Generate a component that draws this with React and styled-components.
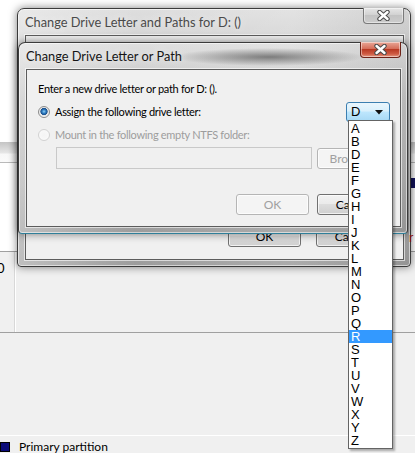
import React from "react";
import styled, { createGlobalStyle } from "styled-components";

const UI = `Lato, "Noto Sans", sans-serif`;

const Global = createGlobalStyle`
  html, body { margin: 0; padding: 0; background: #f0f0f0; }
  #root { width: 415px; height: 453px; }
`;

const LETTERS = "ABDEFGHIJKLMNOPQRSTUVWXYZ".split("");

function CloseGlyph() {
  return (
    <svg width="13" height="11" viewBox="0 0 13 11">
      <path d="M2.5 2 L10.5 9 M10.5 2 L2.5 9" stroke="#4a4a4a" strokeWidth="4.4" strokeLinecap="round" />
      <path d="M2.5 2 L10.5 9 M10.5 2 L2.5 9" stroke="#ffffff" strokeWidth="2.4" strokeLinecap="round" />
    </svg>
  );
}

function Caret() {
  return (
    <svg width="8" height="5" viewBox="0 0 8 5">
      <path d="M0 0 H8 L4 4.5 Z" fill="#111" />
    </svg>
  );
}

function App() {
  return (
    <Desktop>
      <Global />
      <TopPane />
      <Splitter />
      <VolumeList>
        <NavyBand />
      </VolumeList>
      <DiskRow>
        <DiskLabel>0</DiskLabel>
        <DiskCell />
      </DiskRow>
      <DiskSpace />
      <Legend>
        <Swatch />
        <span>Primary partition</span>
      </Legend>

      <Window $left={17} $top={8} $width={394} $height={259}>
        <TitleBar>
          <Title $inactive>Change Drive Letter and Paths for D: ()</Title>
          <CloseButton>
            <CloseGlyph />
          </CloseButton>
        </TitleBar>
        <Client $back>
          <ButtonRow $gap={15}>
            <Button>OK</Button>
            <Button>Cancel</Button>
          </ButtonRow>
        </Client>
      </Window>

      <RedMark>r</RedMark>

      <Window $left={18} $top={42} $width={390} $height={192} $active>
        <TitleBar>
          <Title>Change Drive Letter or Path</Title>
          <CloseButton $red>
            <CloseGlyph />
          </CloseButton>
        </TitleBar>
        <Client>
          <Prompt>Enter a new drive letter or path for D: ().</Prompt>
          <OptionRow>
            <Radio $checked />
            <Label>Assign the following drive letter:</Label>
            <Combo>
              <span>D</span>
              <Caret />
            </Combo>
          </OptionRow>
          <OptionRow $tight>
            <Radio $disabled />
            <Label $disabled>Mount in the following empty NTFS folder:</Label>
          </OptionRow>
          <PathRow>
            <PathInput />
            <Button $disabled>Browse...</Button>
          </PathRow>
          <ButtonRow $gap={8}>
            <Button $disabled>OK</Button>
            <Button>Cancel</Button>
          </ButtonRow>
        </Client>
      </Window>

      <LetterList>
        {LETTERS.map((l) => (
          <Letter key={l} $selected={l === "R"}>
            {l}
          </Letter>
        ))}
      </LetterList>
    </Desktop>
  );
}

const Desktop = styled.div`
  position: relative;
  width: 415px;
  height: 453px;
  overflow: hidden;
  background: #f0f0f0;
  display: flex;
  flex-direction: column;
  font-family: ${UI};
  font-size: 12px;
`;

const TopPane = styled.div`
  height: 145px;
  background: #ffffff;
`;

const Splitter = styled.div`
  height: 20px;
  background: linear-gradient(#c4c4c4, #e6e6e6 55%, #f7f7f7 60%, #fafafa);
  border-bottom: 1px solid #b9b9b9;
`;

const VolumeList = styled.div`
  height: 91px;
  background: #ffffff;
  display: flex;
  flex-direction: column;
  align-items: flex-end;
  padding-top: 15px;
  box-sizing: border-box;
  border-bottom: 1px solid #a0a0a0;
`;

const NavyBand = styled.div`
  width: 23px;
  height: 10px;
  background: #14145e;
`;

const RedMark = styled.div`
  position: absolute;
  left: 409px;
  top: 231px;
  color: #8a1010;
  font-family: "Liberation Sans", Arial, sans-serif;
  font-size: 13px;
  line-height: 13px;
`;

const DiskRow = styled.div`
  height: 81px;
  display: flex;
  border-bottom: 1px solid #a0a0a0;
`;

const DiskLabel = styled.div`
  width: 17px;
  padding-top: 8px;
  margin-left: -3px;
  font-size: 13px;
`;

const DiskCell = styled.div`
  flex: 1;
  border-left: 1px solid #d8d8d8;
  box-shadow: inset 1px 0 0 #ffffff;
`;

const DiskSpace = styled.div`
  height: 104px;
  border-bottom: 1px solid #ffffff;
`;

const Legend = styled.div`
  display: flex;
  align-items: flex-start;
  gap: 9px;
  margin-top: 5px;
  font-size: 12px;
  line-height: 12px;
  color: #000;
`;

const Swatch = styled.div`
  width: 8px;
  height: 8px;
  margin-top: 1px;
  background: #0a0a78;
  border: 1px solid #000;
`;

const Window = styled.div`
  position: absolute;
  left: ${(p) => p.$left}px;
  top: ${(p) => p.$top}px;
  width: ${(p) => p.$width}px;
  height: ${(p) => p.$height}px;
  box-sizing: border-box;
  display: flex;
  flex-direction: column;
  padding: 0 6px 6px 7px;
  border: 1px solid #3b3b3b;
  border-bottom-color: ${(p) => (p.$active ? "#2f7f99" : "#3b3b3b")};
  border-radius: 7px 7px 4px 4px;
  background:
    ${(p) =>
      p.$active
        ? "radial-gradient(ellipse 95px 9px at 250px 14px, rgba(60,60,60,0.6), rgba(60,60,60,0) 100%),"
        : ""}
    linear-gradient(90deg, rgba(255,255,255,0.35), rgba(255,255,255,0) 30%, rgba(255,255,255,0.15) 70%, rgba(0,0,0,0.05)),
    linear-gradient(#dedede, #c2c2c2 30%, #b0b0b0 70%, #9c9c9c);
  box-shadow:
    inset 0 0 0 1px rgba(255, 255, 255, 0.55),
    0 0 9px rgba(0, 0, 0, 0.5);
`;

const TitleBar = styled.div`
  height: 26px;
  display: flex;
  align-items: flex-start;
  justify-content: space-between;
  flex-shrink: 0;
`;

const Title = styled.div`
  padding-top: 5px;
  font-family: ${UI};
  font-size: 12.8px;
  line-height: 16px;
  color: ${(p) => (p.$inactive ? "#4a4a4a" : "#151515")};
  text-shadow: 0 0 8px rgba(255, 255, 255, 0.9);
`;

const CloseButton = styled.div`
  width: 41px;
  height: 16px;
  margin-top: -1px;
  box-sizing: border-box;
  display: flex;
  align-items: center;
  justify-content: center;
  border: 1px solid ${(p) => (p.$red ? "#6e2318" : "#7a7a7a")};
  border-top: none;
  border-radius: 0 0 4px 4px;
  background: ${(p) =>
    p.$red
      ? "linear-gradient(#e9a797, #d56d59 45%, #b93a24 50%, #cf5c44 80%, #e49a84)"
      : "linear-gradient(#e6e6e6, #d2d2d2 45%, #c3c3c3 50%, #cdcdcd)"};
  box-shadow: inset 0 0 0 1px rgba(255, 255, 255, 0.45);
`;

const Client = styled.div`
  flex: 1;
  display: flex;
  flex-direction: column;
  justify-content: ${(p) => (p.$back ? "flex-end" : "flex-start")};
  padding: ${(p) => (p.$back ? "0 14px 12px 0" : "12px 10px 0 11px")};
  background: #f0f0f0;
  border: 1px solid #5c5c5c;
  box-shadow: 0 0 0 1px rgba(255, 255, 255, 0.6);
  color: #000;
  font-size: 11px;
  letter-spacing: -0.3px;
`;

const Prompt = styled.div`
  height: 14px;
  line-height: 14px;
`;

const OptionRow = styled.div`
  display: flex;
  align-items: center;
  gap: 5px;
  height: ${(p) => (p.$tight ? 14 : 20)}px;
  margin-top: 6px;
`;

const Radio = styled.span`
  width: 12px;
  height: 12px;
  box-sizing: border-box;
  flex-shrink: 0;
  border-radius: 50%;
  border: 1px solid ${(p) => (p.$disabled ? "#d2d2d2" : "#8c8c8c")};
  background: ${(p) =>
    p.$checked
      ? "radial-gradient(circle at 50% 45%, #8fd0f6 0, #2a77bd 2px, #1b4f8a 3.3px, #e4e4e4 3.9px, #fdfdfd 6px)"
      : p.$disabled
      ? "radial-gradient(circle, #f4f4f4, #fafafa)"
      : "#fff"};
`;

const Label = styled.span`
  flex: 1;
  line-height: 14px;
  color: ${(p) => (p.$disabled ? "#9d9d9d" : "#000")};
`;

const Combo = styled.div`
  width: 44px;
  height: 20px;
  box-sizing: border-box;
  display: flex;
  align-items: center;
  justify-content: space-between;
  padding: 0 6px 0 4px;
  border: 1px solid #3c7fb1;
  border-radius: 3px;
  background: linear-gradient(#eaf6fd, #d9f0fc 45%, #bee6fd 50%, #a7d9f5);
  font-family: "Liberation Sans", Arial, sans-serif;
  font-size: 13px;
  letter-spacing: 0;
  span {
    line-height: 14px;
  }
`;

const PathRow = styled.div`
  display: flex;
  align-items: center;
  justify-content: space-between;
  margin-top: 5px;
  padding-left: 18px;
`;

const PathInput = styled.div`
  width: 256px;
  height: 22px;
  box-sizing: border-box;
  border: 1px solid #c9c9c9;
  background: #f0f0f0;
`;

const ButtonRow = styled.div`
  display: flex;
  justify-content: flex-end;
  gap: ${(p) => p.$gap}px;
  margin-top: ${(p) => (p.$gap === 8 ? 25 : 0)}px;
`;

const Button = styled.div`
  width: 73px;
  height: 21px;
  box-sizing: border-box;
  display: flex;
  align-items: center;
  justify-content: center;
  border: 1px solid ${(p) => (p.$disabled ? "#b5b5b5" : "#707070")};
  border-radius: 3px;
  background: ${(p) =>
    p.$disabled
      ? "#f4f4f4"
      : "linear-gradient(#f2f2f2, #ebebeb 45%, #dddddd 50%, #cfcfcf)"};
  box-shadow: inset 0 0 0 1px rgba(255, 255, 255, 0.7);
  color: ${(p) => (p.$disabled ? "#a0a0a0" : "#000")};
  font-size: 12px;
  letter-spacing: 0;
  overflow: hidden;
  white-space: nowrap;
`;

const LetterList = styled.div`
  position: absolute;
  left: 348px;
  top: 120px;
  width: 45px;
  box-sizing: border-box;
  padding: 1px 0;
  display: flex;
  flex-direction: column;
  background: #ffffff;
  border: 1px solid #646464;
  box-shadow: 2px 2px 2px rgba(0, 0, 0, 0.3);
`;

const Letter = styled.div`
  height: 13px;
  line-height: 13px;
  padding-left: 2px;
  font-family: "Liberation Sans", Arial, sans-serif;
  font-size: 13px;
  color: ${(p) => (p.$selected ? "#fff" : "#000")};
  background: ${(p) => (p.$selected ? "#3399ff" : "transparent")};
`;

export default App;
